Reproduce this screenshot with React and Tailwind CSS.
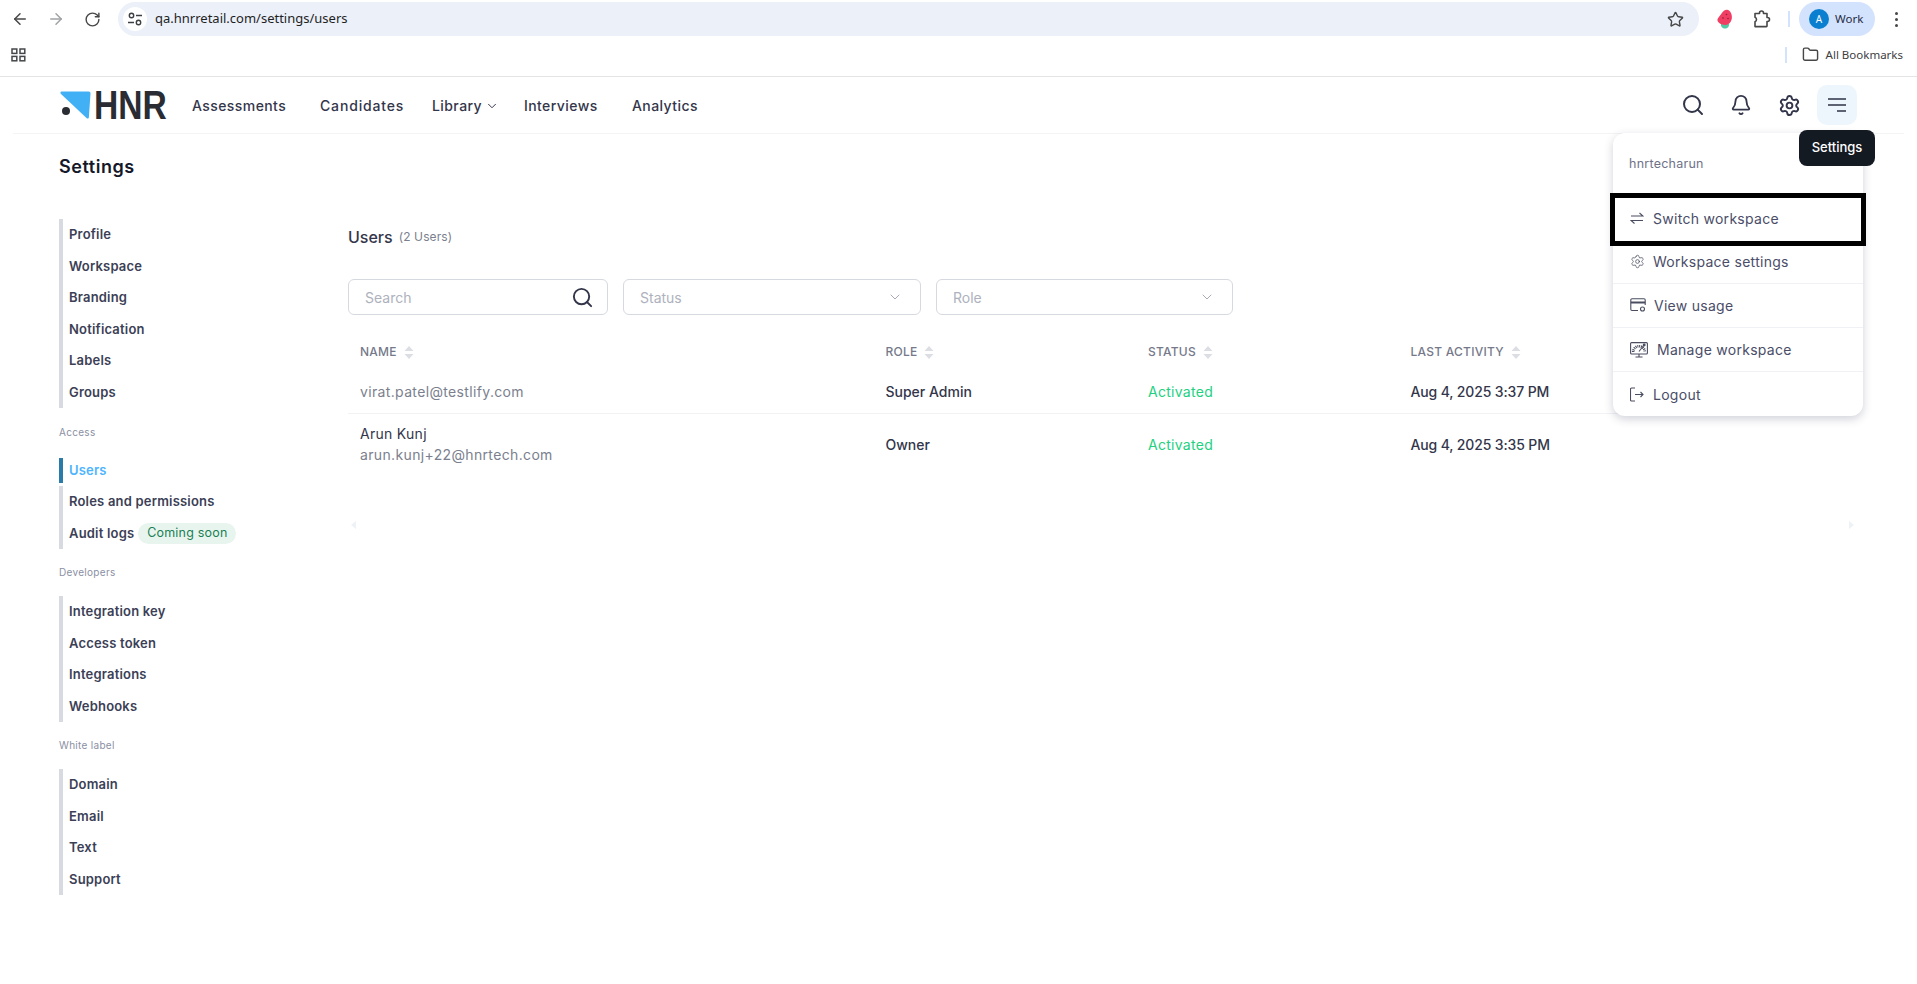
import React from "react";
import {
  ArrowLeft,
  ArrowRight,
  RotateCw,
  Star,
  Folder,
  Search,
  Bell,
  Settings as SettingsIcon,
  ChevronDown,
} from "lucide-react";

const FONT = "font-['Inter','Liberation_Sans',sans-serif]";
const CHROME_FONT = "font-['Noto_Sans','Liberation_Sans',sans-serif]";

const navLinks = [
  { label: "Assessments", w: "w-[128px]" },
  { label: "Candidates", w: "w-[112px]", extra: "tracking-[0.06em]" },
  { label: "Library", w: "w-[92px]", caret: true },
  { label: "Interviews", w: "w-[108px]" },
  { label: "Analytics", w: "w-[70px]" },
];

const sideGroups = [
  { items: ["Profile", "Workspace", "Branding", "Notification", "Labels", "Groups"] },
  { title: "Access", active: "Users", items: ["Roles and permissions", "Audit logs"] },
  { title: "Developers", items: ["Integration key", "Access token", "Integrations", "Webhooks"] },
  { title: "White label", items: ["Domain", "Email", "Text", "Support"] },
];

const rows = [
  { email: "virat.patel@testlify.com", role: "Super Admin", status: "Activated", last: "Aug 4, 2025 3:37 PM" },
  { name: "Arun Kunj", email: "arun.kunj+22@hnrtech.com", role: "Owner", status: "Activated", last: "Aug 4, 2025 3:35 PM" },
];

const TuneIcon = () => (
  <svg width="16" height="16" viewBox="0 0 16 16" fill="none" stroke="#3c4043" strokeWidth="1.4">
    <circle cx="4.5" cy="4.5" r="2.2" />
    <path d="M9 4.5h6M1 11.5h6" />
    <circle cx="11.500" cy="11.500" r="2.2" />
  </svg>
);

const GridIcon = () => (
  <svg width="15" height="14" viewBox="0 0 15 14" fill="none" stroke="#44474a" strokeWidth="1.5">
    <rect x="1" y="1" width="4.8" height="4.4" />
    <rect x="9" y="1" width="4.8" height="4.4" />
    <rect x="1" y="8.4" width="4.8" height="4.4" />
    <rect x="9" y="8.4" width="4.8" height="4.4" />
  </svg>
);

const Strawberry = () => (
  <svg width="16" height="20" viewBox="0 0 16 20">
    <path d="M4 14.500c-.5 3.500 1.500 5 4 5s4.500-2 4-5z" fill="#52c9a4" />
    <path d="M10 .8c3.500.4 5.500 5 4.800 9-.6 3.400-2.800 5.800-5.800 6.100-3.500.4-7.800-1.200-8.500-4.300C0 9.500 3 7 4.500 4.500 6 2.200 8 .6 10 .8z" fill="#f03e62" />
    <circle cx="9.500" cy="5.500" r=".8" fill="#8c1f38" />
    <circle cx="6" cy="9" r=".8" fill="#8c1f38" />
    <circle cx="11" cy="9.500" r=".8" fill="#8c1f38" />
  </svg>
);

const ExtensionIcon = () => (
  <svg width="17" height="18" viewBox="0 0 17 18" fill="none" stroke="#474747" strokeWidth="1.6" strokeLinejoin="round">
    <path d="M1 3.500h4.500V3a2 2 0 0 1 4 0v.5H13v4h.5a2 2 0 0 1 0 4H13V16a.6.6 0 0 1-.6.6H1v-4.800a2.500 2.500 0 0 0 1.500-2.300A2.500 2.500 0 0 0 1 7.200z" />
  </svg>
);

const HamburgerIcon = () => (
  <svg width="18" height="16" viewBox="0 0 18 16" stroke="#2f3347" strokeWidth="1.7">
    <path d="M0 2h18M0 8h18M9 14h9" />
  </svg>
);

const SwitchIcon = () => (
  <svg width="14" height="14" viewBox="0 0 14 14" fill="none" stroke="#4a4d60" strokeWidth="1.1">
    <path d="M1 5h12L9.500 2M13 9.500H1l3.500 3" />
  </svg>
);

const UsageIcon = () => (
  <svg width="16" height="15" viewBox="0 0 16 15" fill="none" stroke="#4a4d60" strokeWidth="1.1">
    <path d="M8 12.500H2A1.200 1.200 0 0 1 .8 11.300V2A1.200 1.200 0 0 1 2 .8h12A1.200 1.200 0 0 1 15.200 2v5" />
    <path d="M.8 4.500h14.400" strokeWidth="2" />
    <circle cx="12.500" cy="11" r="2" />
  </svg>
);

const MonitorIcon = () => (
  <svg width="18" height="16" viewBox="0 0 18 16" fill="none" stroke="#4a4d60" strokeWidth="1.1">
    <rect x=".6" y=".6" width="16.800" height="11.400" rx="1" />
    <path d="M5.500 15h7M9 12v3" />
    <path d="M3.200 10a5.800 5.800 0 0 1 11.600 0" strokeWidth="2.600" strokeDasharray="1 .8" />
    <path d="M9 9.500 14 3" />
    <circle cx="14.200" cy="3" r=".9" fill="#4a4d60" />
  </svg>
);

const LogoutIcon = () => (
  <svg width="14" height="15" viewBox="0 0 14 15" fill="none" stroke="#4a4d60" strokeWidth="1.1">
    <path d="M5 1H1.500a1 1 0 0 0-1 1v11a1 1 0 0 0 1 1H5" />
    <path d="M5 7.500h8M10.500 5l2.500 2.500-2.500 2.500" />
  </svg>
);

const SortIcon = () => (
  <svg width="10" height="13" viewBox="0 0 10 13" fill="#dcdee3">
    <path d="M5 0l4.500 5h-9zM5 13l4.500-5h-9z" />
  </svg>
);

const BrowserBar = () => (
  <div className={`${CHROME_FONT} text-[#1f1f1f]`}>
    <div className="flex h-[36px] items-center pt-[2px]">
      <div className="flex w-[118px] items-center pl-[11px]">
        <ArrowLeft size={18} className="text-[#474747]" />
        <ArrowRight size={18} className="ml-[18px] text-[#a0a2a5]" />
        <RotateCw size={17} className="ml-[19px] text-[#474747]" />
      </div>
      <div className="flex h-[34px] w-[1581px] items-center rounded-full bg-[#ebf0f9] pl-[5px] pr-[15px]">
        <div className="flex h-[24px] w-[24px] items-center justify-center rounded-full bg-white">
          <TuneIcon />
        </div>
        <span className="ml-[8px] text-[13px] text-[#1f1f1f]">qa.hnrretail.com/settings/users</span>
        <Star size={17} className="ml-auto text-[#474747]" />
      </div>
      <div className="ml-[17px] flex w-[17px] justify-center">
        <Strawberry />
      </div>
      <div className="ml-[21px]">
        <ExtensionIcon />
      </div>
      <div className="ml-[17px] h-[16px] w-[2px] bg-[#d3e3fd]" />
      <div className="ml-[9px] flex h-[34px] w-[76px] items-center rounded-full bg-[#d3e3fd] pl-[10px]">
        <div className="flex h-[20px] w-[20px] items-center justify-center rounded-full bg-[#0b7fcf] text-[10px] text-white">A</div>
        <span className="ml-[6px] text-[11.500px] text-[#1f2a44]">Work</span>
      </div>
      <div className="ml-[20px] flex flex-col gap-[3px]">
        <span className="h-[3px] w-[3px] rounded-full bg-[#474747]" />
        <span className="h-[3px] w-[3px] rounded-full bg-[#474747]" />
        <span className="h-[3px] w-[3px] rounded-full bg-[#474747]" />
      </div>
    </div>
    <div className="flex h-[41px] items-center border-b border-[#e3e4e6] pb-[3px] pl-[11px] pr-[14px]">
      <GridIcon />
      <div className="ml-auto h-[16px] w-[2px] bg-[#d3e3fd]" />
      <Folder size={17} className="ml-[15px] text-[#474747]" />
      <span className="ml-[7px] text-[11.500px] text-[#3c4043]">All Bookmarks</span>
    </div>
  </div>
);

const Logo = () => (
  <div className="flex h-[30px] w-[104px] items-center">
    <svg className="shrink-0" width="34" height="30" viewBox="0 0 34 30">
      <path d="M1.500 1.500h27c1.500 0 2 .8 2 2l-1.600 23.500c-.2 1.800-1.400 1.900-2.400.9L1 4c-1-1-.6-2.500.5-2.500z" fill="#42b0f5" />
      <circle cx="6" cy="21" r="4" fill="#2a2c33" />
    </svg>
    <span className="inline-block w-[70px] origin-left scale-x-[0.84] font-['Liberation_Sans',sans-serif] text-[40px] font-bold leading-none text-[#2a2c33]">
      HNR
    </span>
  </div>
);

const MenuRow = ({ icon, label, gap, divider }) => (
  <div className={`flex h-[44px] items-center pl-[17px] text-[14px] tracking-[0.02em] text-[#4a4d68] ${divider ? "border-b border-[#f0f1f4]" : ""}`}>
    {icon}
    <span className={gap}>{label}</span>
  </div>
);

const AccountMenu = () => (
  <div className="absolute right-[41px] top-full z-10 w-[250px] rounded-xl bg-white shadow-[0_3px_10px_rgba(40,44,80,0.22)]">
    <div className="relative">
      <div className="flex h-[63px] items-center pl-[16px] text-[12.500px] tracking-[0.02em] text-[#6f7287]">hnrtecharun</div>
      <MenuRow icon={<SwitchIcon />} gap="ml-[9px]" label="Switch workspace" />
      <MenuRow icon={<SettingsIcon size={15} strokeWidth={1.2} className="text-[#4a4d60]" />} gap="ml-[8px]" label="Workspace settings" divider />
      <MenuRow icon={<UsageIcon />} gap="ml-[8px]" label="View usage" divider />
      <MenuRow icon={<MonitorIcon />} gap="ml-[9px]" label="Manage workspace" divider />
      <MenuRow icon={<LogoutIcon />} gap="ml-[9px]" label="Logout" />
      <div className="absolute -left-[3px] top-[60px] h-[53px] w-[256px] border-[5px] border-black" />
    </div>
    <div className="absolute left-[186px] -top-[3px] flex h-[36px] w-[76px] items-center justify-center rounded-lg bg-[#141a22] text-[13px] font-medium text-white">
      Settings
    </div>
  </div>
);

const TopNav = () => (
  <div className={`${FONT} relative mx-[13px] flex h-[57px] items-center border-b border-[#f3f4f6] pl-[47px] pr-[47px]`}>
    <Logo />
    <div className="ml-[28px] flex items-center">
      {navLinks.map(({ label, w, caret, extra }) => (
        <div key={label} className={`flex items-center text-[14px] font-medium tracking-[0.03em] text-[#33364a] ${w} ${extra || ""}`}>
          {label}
          {caret && <ChevronDown size={14} strokeWidth={1.7} className="ml-[3px] mt-[2px]" />}
        </div>
      ))}
    </div>
    <div className="ml-auto flex items-center">
      <Search size={24} strokeWidth={2} className="text-[#33364a]" />
      <Bell size={22} strokeWidth={2} className="ml-[25px] text-[#33364a]" />
      <SettingsIcon size={23} strokeWidth={2} className="ml-[26px] text-[#33364a]" />
      <div className="ml-[16px] flex h-[40px] w-[40px] items-center justify-center rounded-[10px] bg-[#eef6fd]">
        <HamburgerIcon />
      </div>
    </div>
    <AccountMenu />
  </div>
);

const SideItem = ({ label }) => (
  <div className="flex h-[31.500px] items-center text-[13px] font-semibold tracking-[0.015em] text-[#3c3f56]">
    {label}
    {label === "Audit logs" && (
      <span className="ml-[4px] flex h-[21px] w-[98px] items-center justify-center rounded-full bg-[#e8f5ee] text-[12.500px] font-normal text-[#1a7f55]">
        Coming soon
      </span>
    )}
  </div>
);

const Sidebar = () => (
  <aside className="w-[289px] shrink-0">
    <h1 className="mt-[19px] mb-[38px] h-[28px] text-[18px] font-semibold leading-[28px] tracking-[0.03em] text-[#141829]">Settings</h1>
    {sideGroups.map((group, i) => (
      <div key={i}>
        {group.title && (
          <div className={`h-[14px] text-[10px] leading-[14px] tracking-[0.03em] text-[#8a8fa3] ${i === 1 ? "mt-[17px] mb-[19px]" : "mt-[16px] mb-[17px]"}`}>
            {group.title}
          </div>
        )}
        {group.active && (
          <div className="mb-[3px] flex h-[25px] items-center border-l-4 border-[#2a7ba8] pl-[6px] text-[13px] font-semibold tracking-[0.015em] text-[#4db4ff]">
            {group.active}
          </div>
        )}
        <div className="border-l-4 border-[#d7dbe1] pl-[6px]">
          {group.items.map((item) => (
            <SideItem key={item} label={item} />
          ))}
        </div>
      </div>
    ))}
  </aside>
);

const Select = ({ label, w }) => (
  <div className={`flex h-[36px] items-center justify-between rounded-md border border-[#d6d9e0] pl-[16px] pr-[17px] text-[14px] text-[#aeb2bd] ${w}`}>
    {label}
    <ChevronDown size={16} strokeWidth={1.3} className="text-[#9a9eab]" />
  </div>
);

const COLS = "grid grid-cols-[525.500px_262.500px_262.500px_1fr]";

const UsersTable = () => (
  <div className="mt-[19px]">
    <div className={`${COLS} h-[36px] items-center text-[12px] font-medium tracking-[0.02em] text-[#75798a]`}>
      {["NAME", "ROLE", "STATUS", "LAST ACTIVITY"].map((h) => (
        <div key={h} className="flex items-center gap-[7px] px-3">
          {h}
          <SortIcon />
        </div>
      ))}
    </div>
    {rows.map((r, i) => (
      <div key={r.email} className={`${COLS} items-center text-[14px] ${i === 0 ? "h-[44px] border-b border-[#f1f2f4]" : "h-[60px]"}`}>
        <div className="px-3 text-[#7b7f8e]">
          {r.name && <div className="leading-[21px] tracking-[0.02em] text-[#33364a]">{r.name}</div>}
          <div className="leading-[21px] tracking-[0.025em]">{r.email}</div>
        </div>
        <div className="px-3 font-medium text-[#33364a]">{r.role}</div>
        <div className="px-3 tracking-[0.02em] text-[#22d17f]">{r.status}</div>
        <div className="px-3 font-medium tracking-[-0.01em] text-[#33364a]">{r.last}</div>
      </div>
    ))}
    <div className="mt-[47px] flex justify-between px-[3px]">
      <svg width="5" height="8" viewBox="0 0 5 8" fill="#eef1f5"><path d="M5 0v8L0 4z" /></svg>
      <svg width="5" height="8" viewBox="0 0 5 8" fill="#eef1f5"><path d="M0 0v8l5-4z" /></svg>
    </div>
  </div>
);

export default function App() {
  return (
    <div className="min-h-screen bg-white">
      <BrowserBar />
      <TopNav />
      <div className={`${FONT} flex pl-[59px] pr-[60px]`}>
        <Sidebar />
        <main className="flex-1 pt-[91px]">
          <div className="flex h-[24px] items-center text-[#33364a]">
            <span className="text-[16px] font-medium">Users</span>
            <span className="ml-[6px] text-[12px] tracking-[0.01em] text-[#7b7f8e]">(2 Users)</span>
          </div>
          <div className="mt-[30px] flex gap-[15px]">
            <div className="flex h-[36px] w-[260px] items-center justify-between rounded-md border border-[#d6d9e0] pl-[16px] pr-[13px] text-[14px] text-[#aeb2bd]">
              Search
              <Search size={23} strokeWidth={2} className="text-[#33364a]" />
            </div>
            <Select label="Status" w="w-[298px]" />
            <Select label="Role" w="w-[297px]" />
          </div>
          <UsersTable />
        </main>
      </div>
    </div>
  );
}
